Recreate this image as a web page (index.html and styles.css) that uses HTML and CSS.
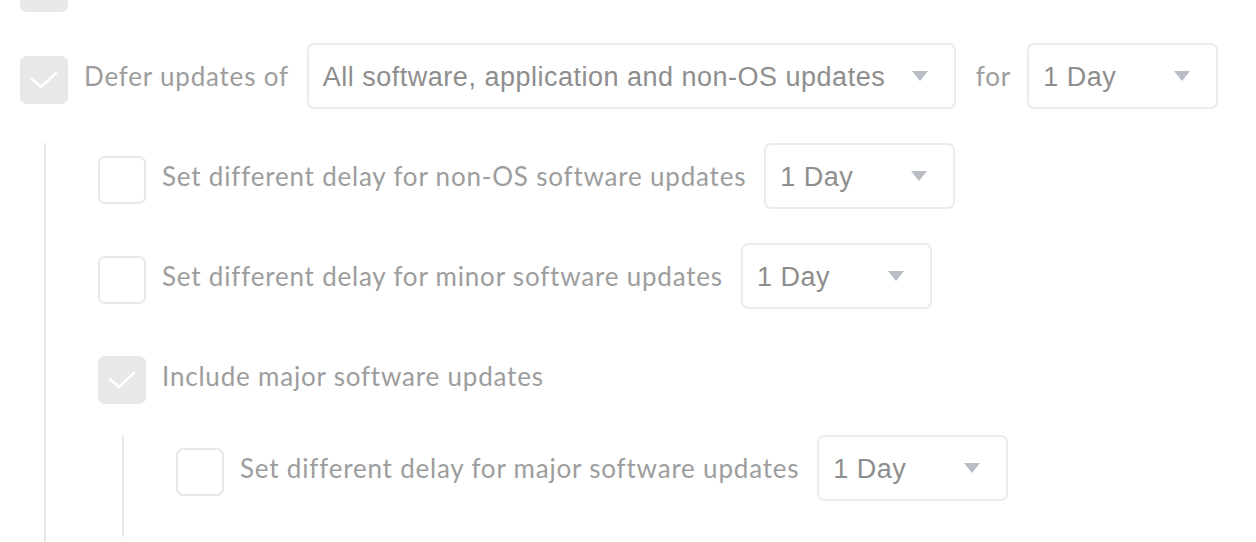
FILE: index.html
```html
<!DOCTYPE html>
<html>
<head>
<meta charset="utf-8">
<link rel="stylesheet" href="styles.css">
</head>
<body>
<div class="page">
  <div class="row row-top">
    <span class="cb checked"><svg viewBox="0 0 48 48" class="tick"><path d="M12 23 L21 31 L36 17" /></svg></span>
  </div>

  <div class="row">
    <span class="cb checked"><svg viewBox="0 0 48 48" class="tick"><path d="M12 23 L21 31 L36 17" /></svg></span>
    <span class="label">Defer updates of</span>
    <div class="select wide"><span class="val">All software, application and non-OS updates</span><span class="arrow"></span></div>
    <span class="label for">for</span>
    <div class="select"><span class="val">1 Day</span><span class="arrow"></span></div>
  </div>

  <div class="group">
    <div class="row">
      <span class="cb"></span>
      <span class="label">Set different delay for non-OS software updates</span>
      <div class="select"><span class="val">1 Day</span><span class="arrow"></span></div>
    </div>
    <div class="row">
      <span class="cb"></span>
      <span class="label">Set different delay for minor software updates</span>
      <div class="select"><span class="val">1 Day</span><span class="arrow"></span></div>
    </div>
    <div class="row">
      <span class="cb checked"><svg viewBox="0 0 48 48" class="tick"><path d="M12 23 L21 31 L36 17" /></svg></span>
      <span class="label">Include major software updates</span>
    </div>
    <div class="group nested">
      <div class="row">
        <span class="cb"></span>
        <span class="label">Set different delay for major software updates</span>
        <div class="select"><span class="val">1 Day</span><span class="arrow"></span></div>
      </div>
    </div>
  </div>
</div>
</body>
</html>
```

FILE: styles.css
```css
html, body {
  margin: 0;
  padding: 0;
  background: #ffffff;
  overflow: hidden;
}

.page {
  margin-top: -36px;
  padding-left: 20px;
  font-family: "Lato", "Open Sans", sans-serif;
}

.row {
  display: flex;
  align-items: center;
  height: 66px;
  margin-bottom: 34px;
}

.row-top {
  height: 48px;
  margin-bottom: 31px;
}

.row-top .cb {
  margin-top: 0;
}

.cb {
  box-sizing: border-box;
  flex: none;
  width: 48px;
  height: 48px;
  margin-top: 8px;
  border: 2px solid #e8e8e8;
  border-radius: 7px;
  background: #fff;
  display: flex;
  align-items: center;
  justify-content: center;
}

.cb.checked {
  background: #e8e8e8;
  border-color: #e8e8e8;
}

.tick {
  width: 48px;
  height: 48px;
  flex: none;
}

.tick path {
  fill: none;
  stroke: #ffffff;
  stroke-width: 2.5;
  stroke-linecap: round;
  stroke-linejoin: round;
}

.label {
  font-size: 26px;
  color: #9d9d9d;
  margin-left: 16px;
  margin-right: 18px;
  white-space: nowrap;
  letter-spacing: 0.8px;
}

.label.for {
  margin-left: 20px;
  margin-right: 16px;
}

.select {
  box-sizing: border-box;
  flex: none;
  width: 191px;
  height: 66px;
  border: 2px solid #ececec;
  border-radius: 7px;
  display: flex;
  align-items: center;
  justify-content: space-between;
  padding-left: 14px;
  padding-right: 26px;
  padding-top: 2px;
  font-family: "Liberation Sans", Arial, sans-serif;
  font-size: 27px;
  letter-spacing: 0.5px;
  color: #8e8e8e;
}

.select.wide {
  width: 649px;
}

.arrow {
  width: 0;
  height: 0;
  margin-bottom: 2px;
  border-left: 8px solid transparent;
  border-right: 8px solid transparent;
  border-top: 10px solid #b8bcc5;
}

.group {
  margin-left: 24px;
  border-left: 2px solid #e8e8e8;
  padding-left: 52px;
  padding-bottom: 40px;
}

.nested {
  margin-top: -8px;
  padding-bottom: 2px;
}
```
